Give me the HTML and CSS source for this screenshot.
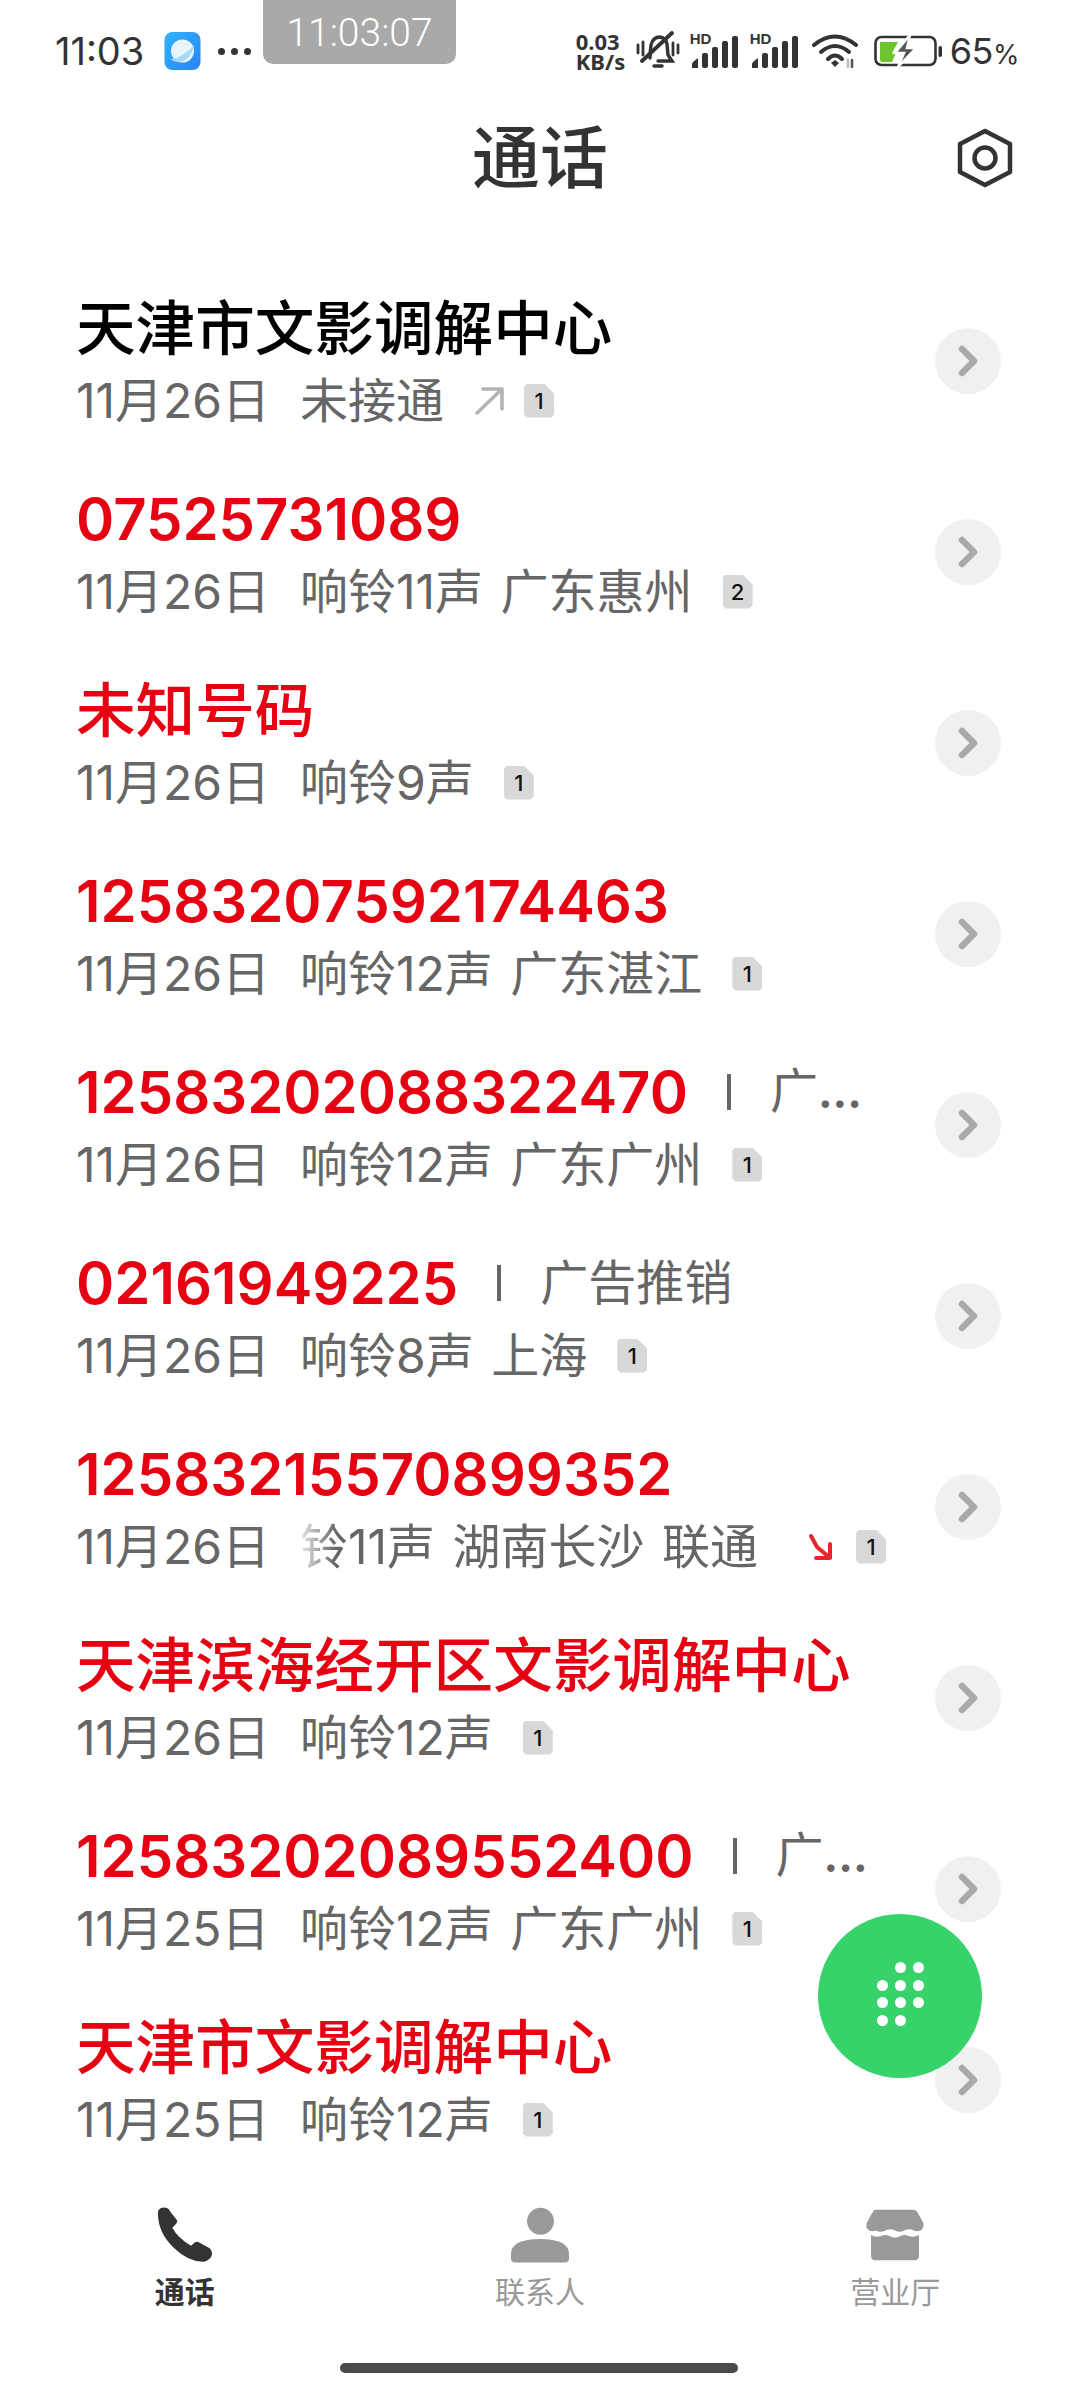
FILE: index.html
```html
<!DOCTYPE html>
<html lang="zh-CN">
<head>
<meta charset="utf-8">
<title>通话</title>
<link rel="stylesheet" href="styles.css">
</head>
<body>
<svg class="defs" width="0" height="0" aria-hidden="true">
  <symbol id="chev" viewBox="0 0 22 32"><path d="M5 4 L17 16 L5 28" fill="none" stroke="#a9a9a9" stroke-width="6.5" stroke-linecap="round" stroke-linejoin="round"/></symbol>
  <symbol id="signal" viewBox="0 0 50 34"><path d="M2 34v-4q0-2 6-6v10z" fill="#333"/><rect x="12" y="19" width="6" height="15" rx="2" fill="#333"/><rect x="22" y="13" width="6" height="21" rx="2" fill="#333"/><rect x="32" y="7" width="6" height="27" rx="2" fill="#333"/><rect x="42" y="2" width="6" height="32" rx="2" fill="#333"/></symbol>
</svg>
<main class="phone">
  <header class="status">
    <div class="status-left">
      <span class="clock">11:03</span>
      <svg class="app" viewBox="0 0 36 38"><defs><linearGradient id="ag" x1="0" y1="0" x2="1" y2="1"><stop offset="0" stop-color="#2fb4fb"/><stop offset="1" stop-color="#2a84f4"/></linearGradient></defs><rect width="36" height="38" rx="8" fill="url(#ag)"/><circle cx="18" cy="19" r="11.5" fill="#e8f5fd"/><path d="M6 27 Q16 27 30 13 Q27 25 19 29 Q11 32 6 27Z" fill="#a8d8f7"/></svg>
      <span class="more"><i></i><i></i><i></i></span>
    </div>
    <div class="status-right">
      <span class="speed">0.03<br>KB/s</span>
      <svg class="bell" viewBox="0 0 44 40" fill="none" stroke="#333" stroke-width="3.4" stroke-linecap="round"><path d="M14 27 Q14 22 15 14 Q17 6 24 6 Q30 7 31 13 L32 24 L36 30 L22 30"/><path d="M18 35h8" stroke-width="3.5"/><path d="M6 30 L36 2" stroke-width="3.8"/><path d="M2 14v8M7 11v13M37 12v12M42 14v8" stroke-width="2.8"/></svg>
      <span class="sig"><b class="hd">HD</b><svg viewBox="0 0 50 34"><use href="#signal"/></svg></span>
      <span class="sig"><b class="hd">HD</b><svg viewBox="0 0 50 34"><use href="#signal"/></svg></span>
      <svg class="wifi" viewBox="0 0 46 34" fill="none" stroke="#333" stroke-linecap="round"><path d="M2 11 Q23 -6 44 11" stroke-width="4"/><path d="M9 18 Q23 6 37 18" stroke-width="4"/><path d="M16 25 Q23 18 30 25" stroke-width="4"/><path d="M19 29l4-3 4 3-4 4z" fill="#333" stroke="none"/><path d="M36 26v7" stroke="#bbb" stroke-width="2.5"/><path d="M40 33v-7" stroke="#555" stroke-width="2.5"/></svg>
      <svg class="batt" viewBox="0 0 68 32"><rect x="1.5" y="2" width="60" height="28" rx="6" fill="none" stroke="#333" stroke-width="2.6"/><path d="M6 7h18l-6 11h4l-4 9H8q-2 0-2-2z" fill="#6cc52f"/><path d="M36 0 L21 18 H30 L24 32 L42 13 H33 Z" fill="#555" stroke="#fff" stroke-width="2.5"/><rect x="64.5" y="11" width="3.5" height="11" rx="1.7" fill="#333"/></svg>
      <span class="pct">65<small>%</small></span>
    </div>
  </header>
  <div class="stamp">11:03:07</div>

  <div class="titlebar">
    <h1>通话</h1>
    <svg class="gear" viewBox="0 0 56 60" fill="none" stroke="#333" stroke-width="4.5" stroke-linejoin="round"><path d="M28 3 L53 16 V44 L28 57 L3 44 V16 Z"/><circle cx="28" cy="30" r="10.5"/></svg>
  </div>

  <ul class="list">
    <li class="row">
      <div class="text">
        <div class="name name-black">天津市文影调解中心</div>
        <div class="sub"><span class="date">11月26日</span><span>未接通</span><svg class="arrow" viewBox="0 0 32 32" fill="none" stroke="#b4b4b4" stroke-width="3.6" stroke-linecap="round" stroke-linejoin="round"><path d="M3 28 L28 4 M9 4 H28 V24"/></svg><span class="sim sim-tight">1</span></div>
      </div>
      <span class="go"><svg viewBox="0 0 22 32"><use href="#chev"/></svg></span>
    </li>
    <li class="row">
      <div class="text">
        <div class="name"><span class="num">07525731089</span></div>
        <div class="sub"><span class="date">11月26日</span><span>响铃11声 广东惠州</span><span class="sim">2</span></div>
      </div>
      <span class="go"><svg viewBox="0 0 22 32"><use href="#chev"/></svg></span>
    </li>
    <li class="row">
      <div class="text">
        <div class="name">未知号码</div>
        <div class="sub"><span class="date">11月26日</span><span>响铃9声</span><span class="sim">1</span></div>
      </div>
      <span class="go"><svg viewBox="0 0 22 32"><use href="#chev"/></svg></span>
    </li>
    <li class="row">
      <div class="text">
        <div class="name"><span class="num">12583207592174463</span></div>
        <div class="sub"><span class="date">11月26日</span><span>响铃12声 广东湛江</span><span class="sim">1</span></div>
      </div>
      <span class="go"><svg viewBox="0 0 22 32"><use href="#chev"/></svg></span>
    </li>
    <li class="row">
      <div class="text">
        <div class="name"><span class="num">12583202088322470</span><i class="bar"></i><span class="tag">广<span class="dots">...</span></span></div>
        <div class="sub"><span class="date">11月26日</span><span>响铃12声 广东广州</span><span class="sim">1</span></div>
      </div>
      <span class="go"><svg viewBox="0 0 22 32"><use href="#chev"/></svg></span>
    </li>
    <li class="row">
      <div class="text">
        <div class="name"><span class="num">02161949225</span><i class="bar"></i><span class="tag">广告推销</span></div>
        <div class="sub"><span class="date">11月26日</span><span>响铃8声 上海</span><span class="sim">1</span></div>
      </div>
      <span class="go"><svg viewBox="0 0 22 32"><use href="#chev"/></svg></span>
    </li>
    <li class="row">
      <div class="text">
        <div class="name"><span class="num">12583215570899352</span></div>
        <div class="sub"><span class="date">11月26日</span><span class="marquee">铃11声 湖南长沙 联通</span><svg class="arrow arrow-red" viewBox="0 0 26 30" fill="none" stroke="#e5262c" stroke-width="4" stroke-linecap="round" stroke-linejoin="round"><path d="M3 4 L9 15 L21 25 M22 12 V26 H8"/></svg><span class="sim sim-red">1</span></div>
      </div>
      <span class="go"><svg viewBox="0 0 22 32"><use href="#chev"/></svg></span>
    </li>
    <li class="row">
      <div class="text">
        <div class="name">天津滨海经开区文影调解中心</div>
        <div class="sub"><span class="date">11月26日</span><span>响铃12声</span><span class="sim">1</span></div>
      </div>
      <span class="go"><svg viewBox="0 0 22 32"><use href="#chev"/></svg></span>
    </li>
    <li class="row">
      <div class="text">
        <div class="name"><span class="num">12583202089552400</span><i class="bar"></i><span class="tag">广<span class="dots">...</span></span></div>
        <div class="sub"><span class="date">11月25日</span><span>响铃12声 广东广州</span><span class="sim">1</span></div>
      </div>
      <span class="go"><svg viewBox="0 0 22 32"><use href="#chev"/></svg></span>
    </li>
    <li class="row">
      <div class="text">
        <div class="name">天津市文影调解中心</div>
        <div class="sub"><span class="date">11月25日</span><span>响铃12声</span><span class="sim">1</span></div>
      </div>
      <span class="go"><svg viewBox="0 0 22 32"><use href="#chev"/></svg></span>
    </li>
  </ul>

  <button class="fab" type="button" aria-label="拨号">
    <span class="pad"><i class="pad-top"></i><i></i><i></i><i></i><i></i><i></i><i></i><i></i><i></i><i></i></span>
  </button>

  <nav class="tabs">
    <div class="tab tab-on">
      <svg viewBox="0 0 168 168" class="tab-ico"><path d="M3 12 Q12 -2 30 3 Q36 5 40 14 L60 40 Q62 46 56 52 L46 62 Q62 92 102 116 L114 106 Q120 102 128 107 L158 124 Q168 132 164 146 Q158 160 140 164 Q95 165 50 122 Q0 75 3 12Z" fill="#333"/></svg>
      <span>通话</span>
    </div>
    <div class="tab">
      <svg viewBox="0 0 57 54" class="tab-ico"><circle cx="29" cy="13.5" r="13.2" fill="#999"/><path d="M0 46 Q0 31 28.5 31 Q57 31 57 46 V50 Q57 54 53 54 H4 Q0 54 0 50Z" fill="#999"/></svg>
      <span>联系人</span>
    </div>
    <div class="tab">
      <svg viewBox="0 0 184 160" class="tab-ico"><path d="M30 0 H150 Q158 0 162 6 L180 38 Q186 50 178 62 Q168 72 152 66 Q138 58 122 66 Q107 74 92 66 Q77 58 62 66 Q46 74 30 66 Q14 72 4 60 Q-2 50 4 38 L22 6 Q26 0 30 0Z" fill="#999"/><path d="M16 80 Q30 88 46 84 Q62 76 76 84 Q92 92 108 84 Q122 76 138 84 Q152 88 168 80 V146 Q168 160 154 160 H30 Q16 160 16 146Z" fill="#999"/></svg>
      <span>营业厅</span>
    </div>
  </nav>
  <div class="home"></div>
</main>
</body>
</html>
```

FILE: styles.css
```css
* { box-sizing: border-box; }
html, body { margin: 0; padding: 0; background: #fff; }
body { font-family: Inter, "Noto Sans CJK SC", sans-serif; }
.defs { position: absolute; }
.phone { position: relative; width: 1080px; height: 2400px; overflow: hidden; display: flex; flex-direction: column; background: #fff; }

.status { height: 100px; flex: none; display: flex; justify-content: space-between; align-items: center; padding: 2px 61px 0 55px; color: #333; }
.status-left, .status-right { display: flex; align-items: center; }
.clock { font-size: 38px; line-height: 1; }
.app { width: 37px; height: 38px; margin-left: 20px; }
.more { display: flex; gap: 6px; margin-left: 17px; }
.more i { width: 7px; height: 7px; border-radius: 50%; background: #333; }
.speed { font: 700 22px/20px "Noto Sans", sans-serif; width: 50px; }
.bell { width: 44px; height: 40px; margin-left: 10px; }
.sig { position: relative; width: 50px; height: 34px; margin-left: 10px; }
.sig svg { width: 50px; height: 34px; display: block; }
.hd { position: absolute; left: 0; top: -3px; font: 700 15px/16px "Liberation Sans", sans-serif; color: #333; }
.wifi { width: 46px; height: 34px; margin-left: 12px; }
.batt { width: 68px; height: 32px; margin-left: 16px; }
.pct { font-size: 36px; line-height: 1; margin-left: 8px; letter-spacing: -.5px; }
.pct small { font-size: 27px; }

.stamp { position: absolute; left: 263px; top: 0; width: 193px; height: 64px; border-radius: 0 0 10px 10px; background: #a9a9a9; color: #fff; font-family: Roboto, sans-serif; font-size: 39px; font-weight: 300; text-align: center; line-height: 66px; }

.titlebar { height: 116px; flex: none; position: relative; display: flex; justify-content: center; align-items: center; }
.titlebar h1 { margin: -8px 0 0; font: 500 68px/1 "Noto Sans CJK SC", sans-serif; color: #333; }
.gear { position: absolute; right: 67px; top: 28px; width: 56px; height: 60px; }

.list { flex: 1; min-height: 0; overflow: hidden; margin: 49px 0 0; padding: 0; list-style: none; }
.row { height: 191px; display: flex; align-items: center; justify-content: space-between; padding: 0 79px 0 76px; }
.text { padding-top: 8px; min-width: 0; }
.name { height: 72px; display: flex; align-items: center; white-space: nowrap; font-size: 59.6px; line-height: 72px; font-weight: 500; color: #e60012; }
.name-black { color: #000; }
.num { font-size: 58px; font-weight: 600; }
.bar { width: 4px; height: 36px; margin: 0 39px; background: #666; flex: none; }
.tag { font-size: 48px; font-weight: 400; color: #666; }
.dots { font-size: 44px; font-weight: 700; }
.sub { height: 74px; display: flex; align-items: center; font-size: 48px; line-height: 74px; color: #666; white-space: nowrap; word-spacing: 4px; }
.date { width: 224px; flex: none; }
.marquee { -webkit-mask-image: linear-gradient(90deg, rgba(0,0,0,.15), #000 36px); mask-image: linear-gradient(90deg, rgba(0,0,0,.15), #000 36px); }
.sim { width: 30px; height: 34px; margin-left: 30px; flex: none; display: flex; align-items: center; justify-content: center; background: #d8d8d8; color: #111; font-size: 22px; font-weight: 500; line-height: 1; clip-path: polygon(0 3px, 3px 0, 20px 0, 30px 10px, 30px 31px, 27px 34px, 3px 34px, 0 31px); }
.sim-tight { margin-left: 18px; }
.sim-red { margin-left: 22px; }
.arrow { width: 32px; height: 32px; margin-left: 30px; flex: none; }
.arrow-red { width: 26px; height: 30px; margin-left: 50px; }
.go { width: 66px; height: 66px; flex: none; display: flex; align-items: center; justify-content: center; border-radius: 50%; background: #f0f0f0; }
.go svg { width: 22px; height: 32px; }

.fab { position: absolute; left: 818px; top: 1914px; width: 164px; height: 164px; border: 0; border-radius: 50%; background: #37d269; padding: 0; display: flex; align-items: center; justify-content: center; }
.pad { display: grid; grid-template-columns: repeat(3, 11px); grid-auto-rows: 11px; gap: 6.5px 7px; margin-top: -4px; }
.pad i { width: 11px; height: 11px; border-radius: 50%; background: #fff; }
.pad .pad-top { grid-column: 2; }

.tabs { height: 170px; flex: none; display: grid; grid-template-columns: repeat(3, 1fr); padding: 17px 7px 0; }
.tab { display: flex; flex-direction: column; align-items: center; color: #999; font: 400 30px/40px "Noto Sans CJK SC", sans-serif; }
.tab-on { color: #333; font-weight: 700; }
.tab-ico { width: 58px; height: 56px; margin-bottom: 7px; }

.home { height: 40px; flex: none; position: relative; }
.home::after { content: ""; position: absolute; left: 340px; top: 3px; width: 398px; height: 10px; border-radius: 5px; background: #4a4a4a; }
```
